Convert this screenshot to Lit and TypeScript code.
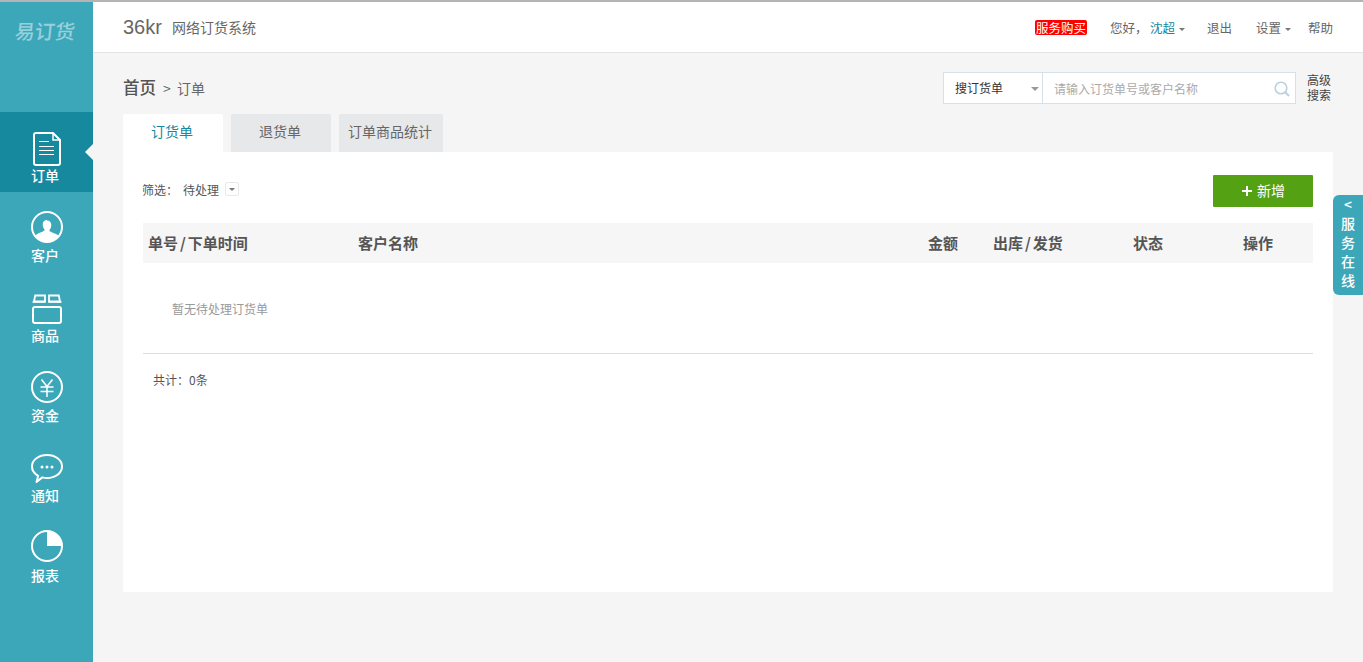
import { LitElement, html, css, svg } from "lit";
import { customElement } from "lit/decorators.js";

const icons: Record<string, unknown> = {
  order: svg`<svg width="28" height="34" viewBox="0 0 28 34" fill="none" stroke="#fff" stroke-width="2"><path d="M3 1h17l7 7v23a2 2 0 0 1-2 2H3a2 2 0 0 1-2-2V3a2 2 0 0 1 2-2z"/><path d="M20 1v7h7" stroke-width="1.500"/><path d="M6 9.500h10M6 14.500h15M6 18.500h15M6 22.500h15" stroke-width="1"/></svg>`,
  customer: svg`<svg width="32" height="32" viewBox="0 0 32 32"><circle cx="16" cy="16" r="15" fill="none" stroke="#fff" stroke-width="2"/><path fill="#fff" d="M16 9.500c2.700 0 4.300 2 4.300 4.700 0 2-1 3.800-2 5 .1 1.400 3 2.300 5.500 3.300 1.500.6 3 1.400 4 2.400A14.500 14.500 0 0 1 16 30.500 14.500 14.500 0 0 1 4.200 24.400c1-1 2.500-1.800 4-2.400 2.500-1 5.400-1.900 5.500-3.300-1-1.200-2-3-2-5 0-2.700 1.600-4.700 4.300-4.700z"/></svg>`,
  goods: svg`<svg width="30" height="30" viewBox="0 0 30 30" fill="none" stroke="#fff" stroke-width="2"><rect x="1" y="13" width="28" height="16" rx="2"/><path d="M2 7.500l1.200-6H13v6zM17 7.500v-6h9.800l1.200 6z" stroke-width="1.800"/><path d="M.5 8h13M16.500 8h13" stroke-width="1.500"/></svg>`,
  money: svg`<svg width="32" height="32" viewBox="0 0 32 32" fill="none" stroke="#fff"><circle cx="16" cy="16" r="15" stroke-width="2"/><path d="M10.500 8.500L16 15.500l5.500-7M9.500 16h13M9.500 20.500h13M16 15.500V26" stroke-width="1.500"/></svg>`,
  notice: svg`<svg width="32" height="30" viewBox="0 0 32 30"><path fill="none" stroke="#fff" stroke-width="2" stroke-linejoin="round" d="M16 1c8.300 0 15 4.900 15 11.500S24.300 24 16 24c-1.700 0-3.200-.2-4.700-.6L5.500 28l1.700-6.200C3.400 19.700 1 16.300 1 12.500 1 5.900 7.700 1 16 1z"/><g fill="#fff"><circle cx="11" cy="13" r="1.500"/><circle cx="16" cy="13" r="1.500"/><circle cx="21" cy="13" r="1.500"/></g></svg>`,
  report: svg`<svg width="32" height="32" viewBox="0 0 32 32"><circle cx="16" cy="16" r="15" fill="none" stroke="#fff" stroke-width="2"/><path fill="#fff" d="M16 1a15 15 0 0 1 15 15H16z"/></svg>`,
};

const nav = [
  { k: "order", t: "订单", on: true },
  { k: "customer", t: "客户" },
  { k: "goods", t: "商品" },
  { k: "money", t: "资金" },
  { k: "notice", t: "通知" },
  { k: "report", t: "报表" },
];

@customElement("app-root")
export class AppRoot extends LitElement {
  static styles = css`
    :host {
      display: block;
      height: 662px;
      overflow: hidden;
      position: relative;
      box-sizing: border-box;
      border-top: 2px solid #b4b4b4;
      background: #f5f5f5;
      font-family: "Noto Sans CJK SC", "Liberation Sans", sans-serif;
      font-size: 12px;
      color: #555;
    }
    * { box-sizing: border-box; }
    .app { display: flex; height: 660px; }
    .side { width: 93px; flex: none; background: #3da7ba; color: #fff; }
    .logo { height: 110px; padding: 17px 0 0 15px; font-size: 20px; line-height: 24px; font-weight: 500; color: #98d0da; }
    .logo span { display: inline-block; transform: skewX(-6deg); }
    .nav { display: block; position: relative; height: 80px; padding-top: 17px; text-align: center; font-size: 14px; line-height: 16px; font-weight: 500; }
    .nav.on { background: #17899f; }
    .nav.on::after { content: ""; position: absolute; right: 0; top: 32px; border: 8px solid transparent; border-right-color: #f5f5f5; border-left-width: 0; }
    .ic { height: 36px; display: flex; align-items: center; justify-content: center; }
    .ic svg { display: block; }
    .nudge-order, .nudge-goods, .nudge-notice { position: relative; top: 2px; }
    .nudge-report { position: relative; top: -1px; }
    .lab { margin: 2px 3px 0 0; }
    .main { flex: 1; min-width: 0; display: flex; flex-direction: column; }
    .head { height: 51px; flex: none; background: #fff; border-bottom: 1px solid #e3e3e3; display: flex; align-items: center; padding: 0 30px; color: #666; }
    .co { font-family: "Liberation Sans", sans-serif; font-size: 20px; color: #666; width: 49px; }
    .sys { font-size: 14px; }
    .tools { margin-left: auto; display: flex; align-items: center; font-size: 12.500px; }
    .buy { width: 52px; height: 15px; background: #f00; color: #fff; border-radius: 2px; line-height: 15px; text-align: center; margin-right: 23px; white-space: nowrap; }
    .teal { color: #17899f; margin-left: 2.500px; }
    .caret { display: inline-block; margin-left: 4px; vertical-align: 2px; border: 3px solid transparent; border-top: 3px solid #777; border-bottom-width: 0; }
    .ti { white-space: nowrap; }
    .hello { width: 97px; }
    .out { width: 49px; }
    .set { width: 52px; }
    .content { flex: 1; padding: 0 30px; }
    .crumb { height: 61px; display: flex; padding-top: 19px; align-items: flex-start; }
    .path { display: flex; align-items: baseline; padding-top: 5px; font-size: 14px; color: #666; line-height: 20px; word-spacing: 3px; }
    .path b { font-size: 16.500px; font-weight: 500; margin-right: 7px; color: #555; }
    .search { margin-left: auto; width: 353px; height: 32px; display: flex; background: #fff; border: 1px solid #d6e0e8; }
    .sel { width: 99px; padding-left: 11px; border-right: 1px solid #d6e0e8; line-height: 30px; color: #333; position: relative; }
    .sel::after { content: ""; position: absolute; top: 14px; right: 3px; border: 4px solid transparent; border-top: 4px solid #999; border-bottom-width: 0; }
    .ph { flex: 1; padding: 1px 5px 0 11px; color: #aaa; display: flex; align-items: center; justify-content: space-between; }
    .adv { width: 37px; padding-left: 11px; line-height: 15px; color: #444; white-space: nowrap; }
    .tabs { display: flex; gap: 8px; height: 38px; }
    .tab { width: 100px; padding-right: 2px; background: #e7e8ea; border-radius: 2px 2px 0 0; text-align: center; font-size: 14px; line-height: 35px; color: #666; }
    .tab.wide { width: 104px; }
    .tab.on { background: #fff; color: #17899f; }
    .card { background: #fff; height: 440px; padding: 23px 20px 0 20px; }
    .bar { display: flex; align-items: flex-start; justify-content: space-between; height: 48px; }
    .filter { display: flex; align-items: center; height: 28px; color: #555; margin-left: -1px; }
    .filter span:nth-child(2) { margin-left: 5px; }
    .drop { width: 14px; height: 14px; margin-left: 6px; border: 1px solid #e8e8e8; border-radius: 2px; position: relative; }
    .drop::after { content: ""; position: absolute; left: 3px; top: 5px; border: 3px solid transparent; border-top: 3px solid #777; border-bottom-width: 0; }
    .add { width: 100px; height: 32px; padding-bottom: 2px; background: #54a214; color: #fff; font-size: 14px; border-radius: 1px; display: flex; align-items: center; justify-content: center; gap: 4px; }
    .add svg { position: relative; top: 1px; }
    .thead { height: 40px; padding: 0 0 2px 5px; background: #f6f6f6; display: grid; grid-template-columns: 210px 570px 65px 140px 110px 70px; align-items: center; font-size: 15px; font-weight: 700; color: #555; }
    .thead i { font-style: normal; padding: 0 2px; }
    .empty { height: 91px; padding: 37px 0 0 29px; color: #999; line-height: 18px; border-bottom: 1px solid #dedee2; }
    .total { padding: 17px 0 0 10px; line-height: 18px; color: #555; }
    .help { position: absolute; right: 0; top: 193px; width: 30px; height: 100px; background: #3da7ba; color: #fff; border-radius: 6px 0 0 6px; display: flex; flex-direction: column; align-items: center; font-size: 14px; line-height: 19px; font-weight: 500; }
  `;

  render() {
    return html`<div class="app">
        <aside class="side">
          <div class="logo"><span>易订货</span></div>
          ${nav.map(
            (n) => html`<a class="nav ${n.on ? "on" : ""}"
              ><div class="ic"><span class="nudge-${n.k}">${icons[n.k]}</span></div>
              <div class="lab">${n.t}</div></a
            >`
          )}
        </aside>
        <div class="main">
          <header class="head">
            <span class="co">36kr</span><span class="sys">网络订货系统</span>
            <div class="tools">
              <span class="buy">服务购买</span>
              <span class="ti hello">您好，<span class="teal">沈超</span><i class="caret"></i></span>
              <span class="ti out">退出</span>
              <span class="ti set">设置<i class="caret"></i></span>
              <span class="ti">帮助</span>
            </div>
          </header>
          <div class="content">
            <div class="crumb">
              <div class="path"><b>首页</b><span>&gt; 订单</span></div>
              <div class="search">
                <div class="sel">搜订货单</div>
                <div class="ph">
                  请输入订货单号或客户名称
                  <svg width="16" height="16" viewBox="0 0 16 16" fill="none" stroke="#bccfdd" stroke-width="1.600"><circle cx="7" cy="7" r="5.800"/><path d="M11 11l4 4" stroke-width="2"/></svg>
                </div>
              </div>
              <div class="adv">高级<br />搜索</div>
            </div>
            <div class="tabs">
              <div class="tab on">订货单</div>
              <div class="tab">退货单</div>
              <div class="tab wide">订单商品统计</div>
            </div>
            <div class="card">
              <div class="bar">
                <div class="filter"><span>筛选：</span><span>待处理</span><span class="drop"></span></div>
                <div class="add">
                  <svg width="12" height="12" viewBox="0 0 12 12" fill="#fff"><path d="M5 1h2v4h4v2H7v4H5V7H1V5h4z"/></svg>
                  新增
                </div>
              </div>
              <div class="thead">
                <span>单号<i>/</i>下单时间</span><span>客户名称</span><span>金额</span><span>出库<i>/</i>发货</span><span>状态</span><span>操作</span>
              </div>
              <div class="empty">暂无待处理订货单</div>
              <div class="total">共计：0条</div>
            </div>
          </div>
        </div>
      </div>
      <div class="help"><span>&lt;</span><span>服</span><span>务</span><span>在</span><span>线</span></div>`;
  }
}
